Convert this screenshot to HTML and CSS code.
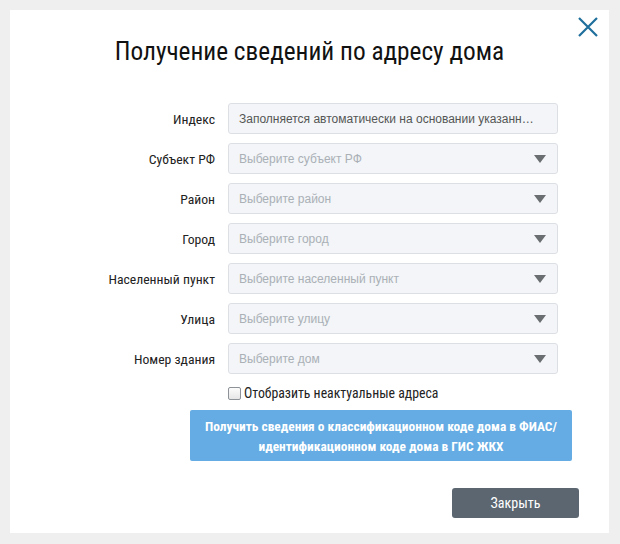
FILE: index.html
```html
<!DOCTYPE html>
<html lang="ru">
<head>
<meta charset="utf-8">
<link rel="stylesheet" href="styles.css">
</head>
<body>
<div class="modal">
  <button class="close-x" aria-label="Закрыть">
    <svg width="22" height="22" viewBox="0 0 22 22"><path d="M2 2 L20 20 M20 2 L2 20" stroke="#1f6f9c" stroke-width="2.2" fill="none"/></svg>
  </button>
  <h1 class="title">Получение сведений по адресу дома</h1>
  <div class="form">
    <label class="lbl">Индекс</label>
    <div class="field readonly"><span class="value">Заполняется автоматически на основании указанн…</span></div>
    <label class="lbl">Субъект РФ</label>
    <div class="field"><span class="ph">Выберите субъект РФ</span><span class="arrow"></span></div>
    <label class="lbl">Район</label>
    <div class="field"><span class="ph">Выберите район</span><span class="arrow"></span></div>
    <label class="lbl">Город</label>
    <div class="field"><span class="ph">Выберите город</span><span class="arrow"></span></div>
    <label class="lbl">Населенный пункт</label>
    <div class="field"><span class="ph">Выберите населенный пункт</span><span class="arrow"></span></div>
    <label class="lbl">Улица</label>
    <div class="field"><span class="ph">Выберите улицу</span><span class="arrow"></span></div>
    <label class="lbl">Номер здания</label>
    <div class="field"><span class="ph">Выберите дом</span><span class="arrow"></span></div>
    <div></div>
    <label class="check"><span class="box"></span>Отобразить неактуальные адреса</label>
  </div>
  <div class="action-row">
    <button class="btn-primary"><span class="line">Получить сведения о классификационном коде дома в ФИАС/</span><span class="line">идентификационном коде дома в ГИС ЖКХ</span></button>
  </div>
  <div class="footer">
    <button class="btn-close">Закрыть</button>
  </div>
</div>
</body>
</html>
```
FILE: styles.css
```css
html, body {
  margin: 0;
  padding: 0;
}
body {
  background: #efefef;
  width: 620px;
  height: 544px;
  overflow: hidden;
  font-family: "Roboto Condensed", "DejaVu Sans Condensed", Roboto, sans-serif;
  font-stretch: condensed;
  color: #222;
}
.modal {
  position: relative;
  margin: 10px 0 0 10px;
  width: 599px;
  height: 523px;
  background: #fff;
  box-sizing: border-box;
  padding-top: 28px;
}
.close-x {
  position: absolute;
  top: 6px;
  right: 10px;
  border: 0;
  background: none;
  padding: 0;
  width: 22px;
  height: 22px;
}
.close-x svg { display: block; }
.title {
  margin: 0;
  text-align: center;
  font-weight: 400;
  font-size: 25.3px;
  line-height: 28px;
  color: #111;
}
.form {
  display: grid;
  grid-template-columns: 205px 330px;
  column-gap: 13px;
  row-gap: 9px;
  margin-top: 37px;
  align-items: center;
}
.lbl {
  text-align: right;
  font-size: 13.7px;
  color: #222;
}
.field {
  height: 31px;
  box-sizing: border-box;
  border: 1px solid #dcdfe4;
  border-radius: 3px;
  background: #f3f5f8;
  display: flex;
  align-items: center;
  padding: 0 10px;
  font-family: "Liberation Sans", Arial, sans-serif;
  font-stretch: normal;
  font-size: 12px;
}
.field .value { color: #555; }
.field .ph { color: #aab0b6; flex: 1; }
.arrow {
  width: 0;
  height: 0;
  border-left: 6px solid transparent;
  border-right: 6px solid transparent;
  border-top: 8px solid #6b6e71;
  margin-right: 1px;
}
.check {
  display: flex;
  align-items: center;
  font-size: 13.8px;
  color: #222;
  margin-top: 2px;
}
.box {
  width: 11px;
  height: 11px;
  border: 1px solid #8d9298;
  border-radius: 2px;
  background: linear-gradient(#fcfcfc, #e6e6e6);
  margin-right: 3px;
  margin-left: 0;
}
.action-row {
  margin-top: 9px;
  padding-left: 180px;
}
.btn-primary {
  width: 382px;
  height: 51px;
  border: 0;
  border-radius: 2px;
  background: #64ace3;
  color: #fff;
  font-family: inherit;
  font-stretch: condensed;
  font-weight: 700;
  font-size: 13.4px;
  line-height: 20px;
  padding: 3px 0 0;
  display: flex;
  flex-direction: column;
  align-items: center;
  justify-content: center;
}
.btn-primary .line { display: block; white-space: nowrap; }
.footer {
  margin-top: 27px;
  padding-left: 442px;
}
.btn-close {
  width: 127px;
  height: 30px;
  border: 0;
  border-radius: 3px;
  background: #5b6670;
  color: #fff;
  font-family: inherit;
  font-stretch: condensed;
  font-size: 14px;
  padding: 0;
}
```
